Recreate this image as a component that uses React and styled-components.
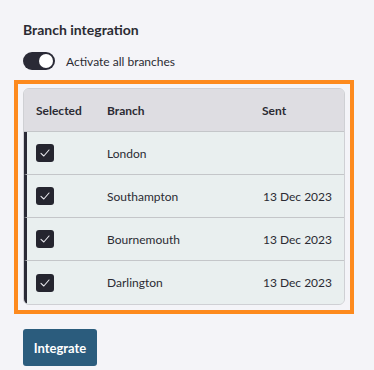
import React, { useState } from 'react'
import styled, { createGlobalStyle } from 'styled-components'

const GlobalStyle = createGlobalStyle`
	html, body {
		margin: 0;
		padding: 0;
		background: #f4f4f8;
		font-family: Lato, 'Open Sans', sans-serif;
		color: #2b2b33;
	}
	* {
		box-sizing: border-box;
	}
`

const Page = styled.div`
	width: 374px;
	height: 370px;
	padding: 20px 0 0 23px;
	display: flex;
	flex-direction: column;
`

const Title = styled.h2`
	margin: 0;
	font-size: 14px;
	font-weight: 700;
	line-height: 20px;
	color: #2b2b33;
`

const ToggleRow = styled.label`
	display: flex;
	align-items: center;
	gap: 11px;
	margin-top: 12px;
	font-size: 12px;
	color: #2b2b33;
	cursor: pointer;
`

const Track = styled.span`
	position: relative;
	width: 32px;
	height: 18px;
	border-radius: 9px;
	background: ${p => (p.$on ? '#2a2a36' : '#b9b9c2')};
	flex-shrink: 0;
`

const Knob = styled.span`
	position: absolute;
	top: 2px;
	left: ${p => (p.$on ? '16px' : '2px')};
	width: 14px;
	height: 14px;
	border-radius: 50%;
	background: #fff;
	transition: left 0.2s;
`

const Focus = styled.div`
	margin: 10px 0 0 -9px;
	width: 340px;
	padding: 4px 5px 5px 5px;
	border: 4px solid #fd8a1e;
`

const Table = styled.div`
	width: 322px;
	border: 1px solid #cfd0d4;
	border-radius: 6px;
	overflow: hidden;
	background: #e9efef;
`

const Row = styled.div`
	display: grid;
	grid-template-columns: 71px 155px 1fr;
	align-items: center;
	height: 43px;
	padding: 0 12px 0 ${p => (p.$head ? '12px' : '9px')};
	background: ${p => (p.$head ? '#dedde2' : '#e9efef')};
	border-left: ${p => (p.$head ? 'none' : '3px solid #2a2a36')};
	border-bottom: ${p => (p.$last ? 'none' : '1px solid #c4c6c9')};
	font-size: 12px;
	font-weight: ${p => (p.$head ? 700 : 400)};
	color: #2b2b33;
`

const Sent = styled.span`
	white-space: nowrap;
	text-align: ${p => (p.$head ? 'left' : 'right')};
`

const Box = styled.span`
	width: 18px;
	height: 18px;
	border-radius: 3px;
	background: #25252f;
	display: flex;
	align-items: center;
	justify-content: center;
`

const Button = styled.button`
	margin-top: 15px;
	width: 74px;
	height: 37px;
	border: none;
	border-radius: 3px;
	background: #2b5c7d;
	color: #fff;
	font-family: Lato, 'Open Sans', sans-serif;
	font-size: 13px;
	font-weight: 700;
	cursor: pointer;
`

const branches = [
	{ name: 'London', sent: '' },
	{ name: 'Southampton', sent: '13 Dec 2023' },
	{ name: 'Bournemouth', sent: '13 Dec 2023' },
	{ name: 'Darlington', sent: '13 Dec 2023' }
]

const Check = () => (
	<Box>
		<svg width="12" height="12" viewBox="0 0 12 12" fill="none">
			<path d="M2 6.3 L4.8 9 L10 3" stroke="#e8e8ee" strokeWidth="1.1" strokeLinecap="round" strokeLinejoin="round" />
		</svg>
	</Box>
)

const App = () => {
	const [on, setOn] = useState(true)
	return (
		<Page>
			<GlobalStyle />
			<Title>Branch integration</Title>
			<ToggleRow onClick={() => setOn(!on)}>
				<Track $on={on}>
					<Knob $on={on} />
				</Track>
				Activate all branches
			</ToggleRow>
			<Focus>
				<Table>
					<Row $head>
						<span>Selected</span>
						<span>Branch</span>
						<Sent $head>Sent</Sent>
					</Row>
					{branches.map((b, i) => (
						<Row key={b.name} $last={i === branches.length - 1}>
							<Check />
							<span>{b.name}</span>
							<Sent>{b.sent}</Sent>
						</Row>
					))}
				</Table>
			</Focus>
			<Button>Integrate</Button>
		</Page>
	)
}

export default App
